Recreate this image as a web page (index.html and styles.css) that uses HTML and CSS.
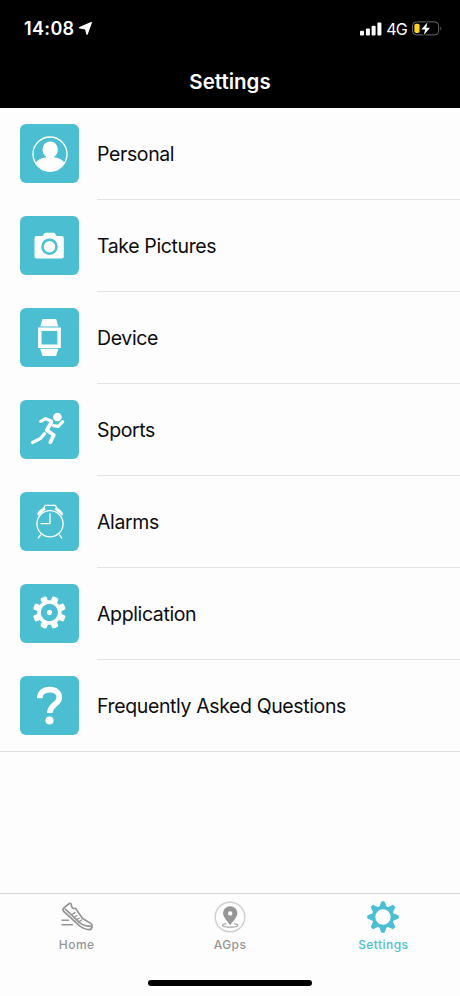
FILE: index.html
```html
<!DOCTYPE html>
<html lang="en">
<head>
<meta charset="utf-8">
<title>Settings</title>
<link rel="stylesheet" href="styles.css">
</head>
<body>
<div class="screen">
  <header class="header">
    <div class="status">
      <div class="clock"><span>14:08</span>
        <svg class="arrow" width="13" height="13" viewBox="0 0 13 13"><path d="M.7 5.700 12.200.700 8 12.200 6.600 6.700Z" fill="#fff" stroke="#fff" stroke-width="1.400" stroke-linejoin="round"/></svg>
      </div>
      <div class="indicators">
        <svg width="22" height="14" viewBox="0 0 22 14" fill="#fff"><rect x="0" y="8.7" width="4" height="4.8" rx="1"/><rect x="5.9" y="6.5" width="4" height="7" rx="1"/><rect x="11.6" y="3.7" width="4" height="9.8" rx="1"/><rect x="17.4" y=".5" width="4" height="13" rx="1"/></svg>
        <span class="network">4G</span>
        <svg class="battery" width="30" height="15" viewBox="0 0 30 15"><rect x=".6" y=".9" width="26" height="13" rx="3.8" fill="none" stroke="#686868"/><path d="M28.3 5.4q2 2 0 4z" fill="#686868"/><rect x="2.4" y="2.7" width="5.2" height="9.4" rx="1.8" fill="#fdd21c"/><path d="M15.5 1.2 9.4 8.5h3.7l-1.2 5.6 6.1-7.3h-3.8z" fill="#fff" stroke="#000" stroke-width="1.8" paint-order="stroke"/></svg>
      </div>
    </div>
    <h1 class="title">Settings</h1>
  </header>
  <main class="list">
    <div class="row"><svg class="icon" viewBox="0 0 59 59"><circle cx="30" cy="30" r="17" fill="none" stroke="#fff" stroke-width="1.3"/><ellipse cx="30.2" cy="25.6" rx="7.7" ry="8.2" fill="#fff"/><path d="M26.2 30h8v3.2c5 1 8.700 2.500 10.700 5.800A17 17 0 0 1 15.200 39c2-3.300 6-4.800 11-5.800z" fill="#fff"/></svg><span class="label">Personal</span></div>
    <div class="row"><svg class="icon" viewBox="0 0 59 59"><path d="M16.500 19.900h6.200l1.500-2.500q.4-.7 1.200-.7h8.500q.8 0 1.200.7l1.500 2.500h5.200q2 0 2 2v18.700q0 2-2 2H16.500q-2 0-2-2V21.900q0-2 2-2z" fill="#fff"/><circle cx="29.500" cy="30.700" r="7" fill="#fff" stroke="#4bbfd1" stroke-width="2.500"/></svg><span class="label">Take Pictures</span></div>
    <div class="row"><svg class="icon" viewBox="0 0 59 59"><path d="M22.500 11h13.600l2.300 7.500H20.200zM20.200 40.800h18.200l-2.300 7.200H22.500z" fill="#fff"/><path d="M19.800 21.300h19.300v17H19.800z" fill="none" stroke="#fff" stroke-width="3.500"/></svg><span class="label">Device</span></div>
    <div class="row"><svg class="icon" viewBox="0 0 59 59"><circle cx="37.400" cy="17" r="4.300" fill="#fff"/><g fill="none" stroke="#fff" stroke-width="3.200" stroke-linecap="round" stroke-linejoin="round"><path d="M20.800 21.300 25.600 18.700 31.500 21.200M33.500 25.600 38.200 26.500 42.700 21.600M24.600 33.600 20.600 38.300 12.600 42.500"/><path d="M31.300 22.600 26.700 30.200 33.800 35 30.300 42.300" stroke-width="3.800"/></g></svg><span class="label">Sports</span></div>
    <div class="row"><svg class="icon" viewBox="0 0 59 59"><g fill="none" stroke="#fff" stroke-width="1.300"><circle cx="30" cy="31.700" r="13.100"/><path d="M30 21.300v10.400h-9.400M20.800 42.600 18 46.300M39.200 42.600 42 46.300M23 17.400l2.300-4.100h10l2.300 4.100"/></g><path d="M17 22.300q2.200-5.600 7.700-6.600l1 1.500-7.300 6.300zM43.300 22.300q-2.200-5.600-7.700-6.600l-1 1.500 7.300 6.300z" fill="#fff"/></svg><span class="label">Alarms</span></div>
    <div class="row"><svg class="icon" viewBox="0 0 59 59"><g transform="translate(29.400 28.500) rotate(22.500)" fill="#fff"><g id="teeth"><rect x="-3.300" y="-16.500" width="6.600" height="33" rx="1.600"/><rect x="-16.500" y="-3.300" width="33" height="6.600" rx="1.600"/></g><use href="#teeth" transform="rotate(45)"/><circle r="12.200"/><circle r="8.600" fill="#4bbfd1"/><circle r="2.600"/></g></svg><span class="label">Application</span></div>
    <div class="row"><svg class="icon" viewBox="0 0 59 59"><path d="M19.800 22.300C19.800 16.800 23.500 13.700 29.700 13.700 35.800 13.700 39.300 16.800 39.300 21.500 39.300 28.500 29.800 28.500 29.800 37" fill="none" stroke="#fff" stroke-width="5.700"/><circle cx="29.500" cy="44.600" r="4" fill="#fff"/></svg><span class="label">Frequently Asked Questions</span></div>
  </main>
  <nav class="tabs">
    <div class="tab">
      <svg width="34" height="34" viewBox="0 0 34 34" fill="none" stroke="#969696" stroke-width="1.700" stroke-linecap="round" stroke-linejoin="round"><path d="M3.600 8.200 9.300 3.500q1.700-.8 2 1.200.2 4.500 4.300 3.700l6.800 9.800 8.300 5.200q2.200 1.600 1.200 4-.9 2.800-4.500 2.100-3.800-.7-7.500-3.400L3.800 11.500q-1.500-1.800-.2-3.300z"/><path d="M5.300 9.200 20 22.800q4 3.400 11.500 3.600"/><path d="M15 12.700l-3 2M17 15.500l-3.200 2M19 18.200l-3 1.800M21.500 20l-2.600 2M2 20.300h6.500M2 24.800h10.500" stroke-width="1.400"/></svg>
      <span>Home</span>
    </div>
    <div class="tab">
      <svg width="34" height="34" viewBox="0 0 34 34"><circle cx="17" cy="17" r="14.800" fill="none" stroke="#cfcfcf" stroke-width="1.400"/><path d="M13.300 23.600c-7 1.100-4 3.500 3.900 3.500s10.800-2.400 3.900-3.500" fill="none" stroke="#aaa" stroke-width="1.100"/><path fill-rule="evenodd" d="M17.200 25.200c-2.500-4-7.200-8-7.200-12.200a7.200 6.800 0 0 1 14.400 0c0 4.200-4.700 8.200-7.200 12.200zM17.200 11.200a2.200 2.200 0 1 0 0 4.400 2.200 2.200 0 0 0 0-4.400z" fill="#969696"/></svg>
      <span>AGps</span>
    </div>
    <div class="tab active">
      <svg width="34" height="34" viewBox="0 0 34 34"><g transform="translate(17 17)" fill="#4bbfd1" stroke="#4bbfd1" stroke-linejoin="round"><g id="cogs"><path id="cog" d="M-3.400-9.500-1.300-15.200H1.300L3.400-9.500z"/><use href="#cog" transform="rotate(90)"/><use href="#cog" transform="rotate(180)"/><use href="#cog" transform="rotate(270)"/></g><use href="#cogs" transform="rotate(45)"/><circle r="9.400" fill="none" stroke-width="3.400"/></g></svg>
      <span>Settings</span>
    </div>
  </nav>
  <div class="home-bar"></div>
</div>
</body>
</html>
```
FILE: styles.css
```css
* { box-sizing: border-box; }
body { margin: 0; background: #fdfdfd; font-family: Inter, "Liberation Sans", sans-serif; }
.screen { width: 460px; height: 996px; display: flex; flex-direction: column; background: #fdfdfd; }
.header { height: 108px; background: #000; color: #fff; }
.status { height: 56px; padding: 1px 18px 0 24px; display: flex; justify-content: space-between; align-items: center; }
.clock { display: flex; align-items: center; gap: 4px; font-size: 18px; font-weight: 600; letter-spacing: .35px; }
.arrow { margin-bottom: 1px; }
.indicators { display: flex; align-items: center; }
.network { margin: 0 5px 0 4.5px; font-size: 16px; letter-spacing: -.7px; }
.title { margin: 0; height: 52px; line-height: 51px; text-align: center; font-size: 20.5px; font-weight: 600; }
.list { border-bottom: 1px solid #dedede; }
.row { height: 92px; padding: 0 0 0 20px; display: flex; align-items: center; gap: 18px; }
.row:last-child { height: 91px; }
.icon { width: 59px; height: 59px; flex: none; margin-bottom: 1px; border-radius: 6px; background: #4bbfd1; }
.row:last-child .icon { margin-bottom: 0; }
.label { flex: 1; height: 92px; line-height: 93px; font-size: 19.5px; letter-spacing: -.38px; color: #0c0c0c; border-bottom: 1px solid #e3e3e3; }
.row:last-child .label { height: 91px; border-bottom: 0; }
.tabs { margin-top: auto; height: 86px; border-top: 1px solid #d6d6d6; display: flex; }
.tab { flex: 1; padding-top: 6px; display: flex; flex-direction: column; align-items: center; color: #969696; font-size: 12px; font-weight: 500; letter-spacing: .45px; line-height: 20px; }
.tab span { margin-top: 1px; }
.active { color: #4bbfd1; }
.home-bar { width: 164px; height: 6px; margin: 1px auto 10px; border-radius: 3px; background: #000; }
```
